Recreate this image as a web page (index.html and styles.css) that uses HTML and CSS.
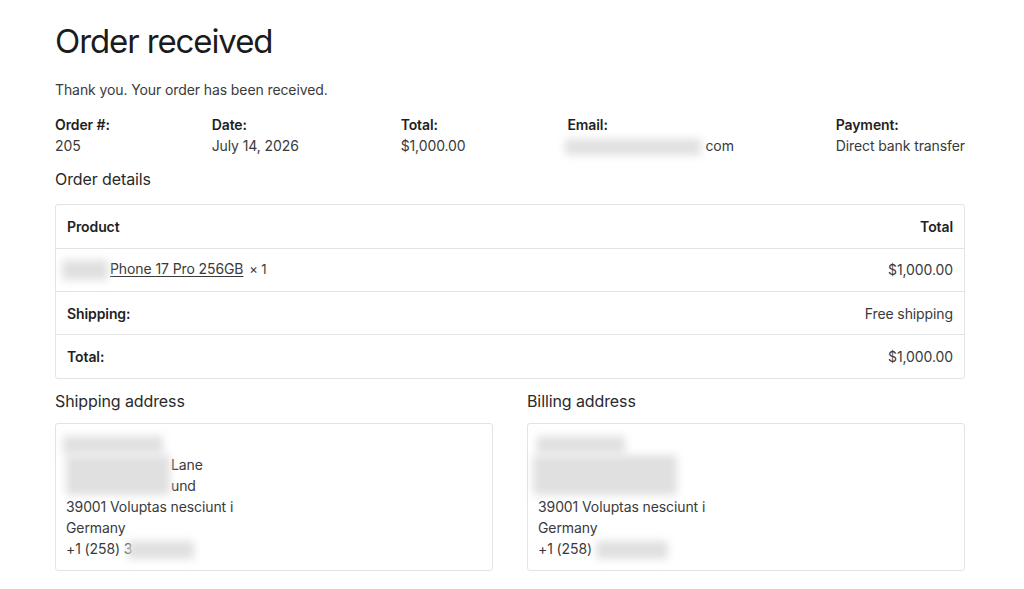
FILE: index.html
```html
<!DOCTYPE html>
<html lang="en">
<head>
<meta charset="utf-8">
<title>Order received</title>
<link rel="stylesheet" href="styles.css">
</head>
<body>
<main class="page">
  <h1 class="title">Order received</h1>
  <p class="notice">Thank you. Your order has been received.</p>

  <ul class="overview">
    <li><strong>Order #:</strong><span>205</span></li>
    <li><strong>Date:</strong><span>July 14, 2026</span></li>
    <li><strong>Total:</strong><span>$1,000.00</span></li>
    <li><strong>Email:</strong><span><span class="redact redact-email"></span>com</span></li>
    <li><strong>Payment:</strong><span>Direct bank transfer</span></li>
  </ul>

  <h2 class="section-title">Order details</h2>
  <div class="table-wrap">
    <table class="order-table">
      <thead>
        <tr><th>Product</th><th class="num">Total</th></tr>
      </thead>
      <tbody>
        <tr>
          <td><span class="redact redact-product"></span><a href="#" class="product-link">Phone 17 Pro 256GB</a> <span class="qty">×&nbsp;1</span></td>
          <td class="num">$1,000.00</td>
        </tr>
        <tr><th>Shipping:</th><td class="num">Free shipping</td></tr>
        <tr><th>Total:</th><td class="num">$1,000.00</td></tr>
      </tbody>
    </table>
  </div>

  <div class="addresses">
    <section class="address-col">
      <h2 class="section-title">Shipping address</h2>
      <address class="address-box">
        <span class="line"><span class="redact redact-name"></span></span>
        <span class="street">
          <span class="redact redact-street"></span>
          <span class="street-tail"><span class="line">Lane</span><span class="line">und</span></span>
        </span>
        <span class="line">39001 Voluptas nesciunt i</span>
        <span class="line">Germany</span>
        <span class="line">+1 (258) 3<span class="redact redact-phone"></span></span>
      </address>
    </section>
    <section class="address-col">
      <h2 class="section-title">Billing address</h2>
      <address class="address-box">
        <span class="line"><span class="redact redact-name billing-name"></span></span>
        <span class="street">
          <span class="redact redact-street billing-street"></span>
        </span>
        <span class="line">39001 Voluptas nesciunt i</span>
        <span class="line">Germany</span>
        <span class="line">+1 (258) <span class="redact redact-phone billing-phone"></span></span>
      </address>
    </section>
  </div>
</main>
</body>
</html>
```

FILE: styles.css
```css
* {
  box-sizing: border-box;
}

html, body {
  margin: 0;
  background: #ffffff;
}

body {
  font-family: "Inter", "Noto Sans", sans-serif;
  color: #3a3a3a;
  font-size: 14px;
  letter-spacing: -0.1px;
}

.page {
  width: 910px;
  margin-left: 55px;
  padding-top: 20px;
}

.title {
  margin: 0;
  font-size: 33px;
  line-height: 42px;
  font-weight: 400;
  color: #1b1b1b;
  letter-spacing: -1.1px;
}

.notice {
  margin: 18px 0 0;
  line-height: 20px;
  color: #3a3a3a;
}

.overview {
  list-style: none;
  margin: 14px 0 0;
  padding: 0;
  display: flex;
  justify-content: space-between;
}

.overview li {
  display: flex;
  flex-direction: column;
  line-height: 21px;
}

.overview strong {
  font-weight: 600;
  color: #1f1f1f;
}

/* soft grey boxes that hide personal details */
.redact {
  display: inline-block;
  background: #e0e0e0;
  filter: blur(4px);
  vertical-align: middle;
}

.redact-email {
  width: 136px;
  height: 16px;
  margin: 0 4px 0 -2px;
}

.section-title {
  margin: 12px 0 0;
  font-size: 16px;
  line-height: 22px;
  font-weight: 400;
  color: #2a2a2a;
}

.table-wrap {
  margin-top: 14px;
  border: 1px solid #e3e3e3;
  border-radius: 3px;
}

.order-table {
  width: 100%;
  border-collapse: collapse;
}

.order-table th,
.order-table td {
  height: 43.25px;
  padding: 0 11px;
  text-align: left;
  font-weight: 400;
  vertical-align: middle;
}

.order-table th {
  font-weight: 600;
  color: #1f1f1f;
}

.order-table tbody tr th,
.order-table tbody tr td {
  border-top: 1px solid #e3e3e3;
}

.order-table .num {
  text-align: right;
}

.redact-product {
  width: 46px;
  height: 20px;
  margin: 0 2px 0 -5px;
}

.product-link {
  color: #3a3a3a;
  text-decoration: underline;
  text-underline-offset: 2px;
  text-decoration-thickness: 1px;
}

.qty {
  margin-left: 2px;
  font-size: 13px;
}

.addresses {
  display: grid;
  grid-template-columns: 1fr 1fr;
  gap: 34px;
}

.address-col .section-title {
  margin-top: 11px;
}

.address-box {
  margin-top: 11px;
  border: 1px solid #e3e3e3;
  border-radius: 3px;
  padding: 9px 10px 9px;
  font-style: normal;
  line-height: 21px;
  display: flex;
  flex-direction: column;
  height: 148px;
}

.line {
  display: block;
  height: 21px;
}

.redact-name {
  width: 100px;
  height: 18px;
  margin-left: -3px;
}

.street {
  display: flex;
  align-items: center;
  height: 42px;
}

.redact-street {
  width: 104px;
  height: 40px;
}

.street-tail {
  display: flex;
  flex-direction: column;
  margin-left: 1px;
}

.redact-phone {
  width: 66px;
  height: 18px;
  margin-left: -4px;
}

.billing-name {
  width: 88px;
  margin-left: -1px;
}

.billing-street {
  width: 144px;
  margin-left: -5px;
}

.billing-phone {
  width: 72px;
  margin-left: 0;
}
```
